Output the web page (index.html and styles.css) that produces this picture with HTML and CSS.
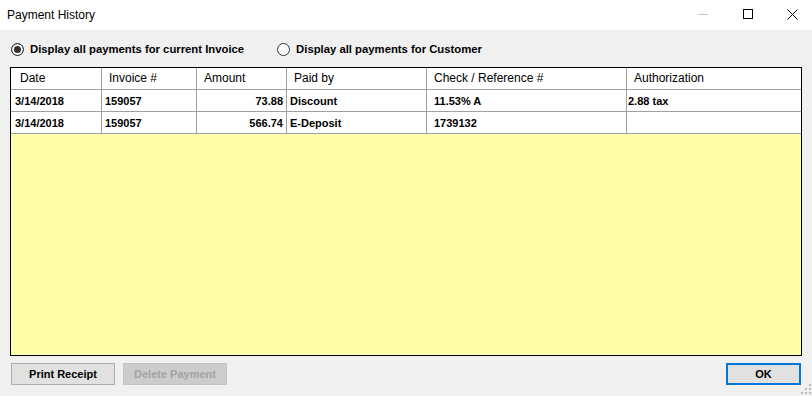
FILE: index.html
```html
<!DOCTYPE html>
<html lang="en">
<head>
    <meta charset="UTF-8">
    <title>Payment History</title>
    <link rel="stylesheet" href="styles.css">
</head>
<body>
    <div class="window">
        <div class="titlebar">
            <span class="title">Payment History</span>
            <div class="caption-buttons">
                <span class="cap-btn">
                    <svg width="10" height="10" viewBox="0 0 10 10"><path d="M0 5.5h10" stroke="#c6c6c6" stroke-width="1"/></svg>
                </span>
                <span class="cap-btn">
                    <svg width="10" height="10" viewBox="0 0 10 10"><rect x="0.5" y="0.5" width="9" height="9" fill="none" stroke="#000" stroke-width="1"/></svg>
                </span>
                <span class="cap-btn">
                    <svg width="11" height="11" viewBox="0 0 11 11"><path d="M0.5 0.5l10 10M10.5 0.5l-10 10" stroke="#000" stroke-width="1"/></svg>
                </span>
            </div>
        </div>

        <div class="content">
            <div class="filter-row">
                <label class="radio-option"><span class="radio checked"></span>Display all payments for current Invoice</label>
                <label class="radio-option"><span class="radio"></span>Display all payments for Customer</label>
            </div>

            <div class="grid-box">
                <div class="grid">
                    <div class="hd first">Date</div>
                    <div class="hd">Invoice #</div>
                    <div class="hd">Amount</div>
                    <div class="hd">Paid by</div>
                    <div class="hd">Check / Reference #</div>
                    <div class="hd last">Authorization</div>

                    <div class="cell c-date">3/14/2018</div>
                    <div class="cell c-inv">159057</div>
                    <div class="cell c-amt">73.88</div>
                    <div class="cell c-paid">Discount</div>
                    <div class="cell c-ref">11.53% A</div>
                    <div class="cell c-auth last">2.88 tax</div>

                    <div class="cell c-date">3/14/2018</div>
                    <div class="cell c-inv">159057</div>
                    <div class="cell c-amt">566.74</div>
                    <div class="cell c-paid">E-Deposit</div>
                    <div class="cell c-ref">1739132</div>
                    <div class="cell c-auth last"></div>
                </div>
            </div>

            <div class="button-row">
                <button class="btn">Print Receipt</button>
                <button class="btn" disabled>Delete Payment</button>
                <button class="btn btn-ok">OK</button>
            </div>
        </div>

        <span class="grip">
            <svg width="12" height="12" viewBox="0 0 12 12" fill="#bdbdbd">
                <rect x="9" y="1" width="2" height="2"/>
                <rect x="9" y="5" width="2" height="2"/>
                <rect x="5" y="5" width="2" height="2"/>
                <rect x="9" y="9" width="2" height="2"/>
                <rect x="5" y="9" width="2" height="2"/>
                <rect x="1" y="9" width="2" height="2"/>
            </svg>
        </span>
    </div>
</body>
</html>
```

FILE: styles.css
```css
body {
    margin: 0;
    font-family: "Liberation Sans", Arial, sans-serif;
    color: #000;
    overflow: hidden;
}
.window {
    position: relative;
    width: 812px;
    height: 396px;
    background-color: #f0f0f0;
    overflow: hidden;
}
.titlebar {
    height: 30px;
    background-color: #fff;
    display: flex;
    align-items: center;
}
.title {
    padding-left: 7px;
    font-size: 12px;
}
.caption-buttons {
    margin-left: auto;
    margin-right: -3px;
    display: flex;
    align-self: flex-start;
}
.cap-btn {
    width: 45px;
    height: 30px;
    box-sizing: border-box;
    padding-top: 9px;
    display: flex;
    justify-content: center;
    align-items: flex-start;
}
.content {
    padding: 0 10px;
}
.filter-row {
    height: 37px;
    display: flex;
    align-items: center;
    padding-left: 1px;
    padding-top: 1px;
    box-sizing: border-box;
}
.radio-option {
    display: flex;
    align-items: center;
    gap: 6px;
    font-size: 11.3px;
    font-weight: bold;
    margin-right: 33px;
}
.radio {
    width: 13px;
    height: 13px;
    box-sizing: border-box;
    border: 1px solid #333;
    border-radius: 50%;
    background-color: #fff;
}
.radio.checked {
    background-color: #333;
    box-shadow: inset 0 0 0 2px #fff;
}
.grid-box {
    height: 289px;
    box-sizing: border-box;
    border: 1px solid #000;
    background-color: #ffffaa;
}
.grid {
    display: grid;
    grid-template-columns: 91px 95px 90px 140px 200px 1fr;
    grid-auto-rows: 22px;
}
.grid > div {
    background-color: #fff;
    box-sizing: border-box;
    border-right: 1px solid #a0a0a0;
    border-bottom: 1px solid #a0a0a0;
    white-space: nowrap;
    overflow: hidden;
}
.grid > div.last {
    border-right: none;
}
.hd {
    font-size: 12px;
    line-height: 21px;
    padding-left: 7px;
}
.hd.first {
    padding-left: 9px;
}
.cell {
    font-size: 11px;
    font-weight: bold;
    line-height: 19px;
    padding-top: 2px;
    padding-left: 3px;
}
.c-date {
    padding-left: 4px;
}
.c-amt {
    text-align: right;
    padding-right: 3px;
}
.c-ref {
    padding-left: 7px;
}
.c-auth {
    padding-left: 1px;
}
.button-row {
    display: flex;
    gap: 8px;
    margin-top: 7px;
    padding: 0 1px;
}
.btn {
    width: 104px;
    height: 22px;
    box-sizing: border-box;
    border: 1px solid #adadad;
    background-color: #e1e1e1;
    font-family: "Liberation Sans", Arial, sans-serif;
    font-size: 11px;
    font-weight: bold;
    color: #000;
    padding: 0;
}
.btn:disabled {
    background-color: #cccccc;
    border-color: #c4c4c4;
    color: #a3a3a3;
}
.btn-ok {
    margin-left: auto;
    width: 75px;
    border: 2px solid #0078d7;
}
.grip {
    position: absolute;
    right: 0;
    bottom: 1px;
    line-height: 0;
}
```
